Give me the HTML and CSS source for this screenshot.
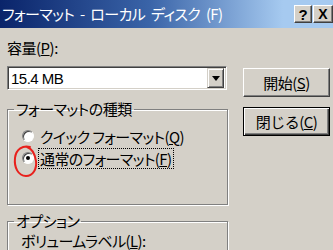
FILE: index.html
```html
<!DOCTYPE html>
<html lang="ja">
<head>
<meta charset="utf-8">
<title>フォーマット</title>
<link rel="stylesheet" href="styles.css">
</head>
<body>
<div class="window">
  <div class="titlebar">
    <span class="title">フォーマット - ローカル ディスク (F)</span>
    <div class="tbtns">
      <span class="tbtn help">?</span>
      <span class="tbtn close">X</span>
    </div>
  </div>
  <div class="content">
    <div class="left">
      <div class="lbl">容量(<u>P</u>):</div>
      <div class="combo">
        <span class="val">15.4 MB</span>
        <span class="drop"><svg width="8" height="5" viewBox="0 0 8 5"><path d="M0 0 H8 L4 5 Z" fill="#000"/></svg></span>
      </div>
      <fieldset class="group g1">
        <legend>フォーマットの種類</legend>
        <div class="radio"><span class="rb"></span><span class="rt">クイック フォーマット(<u>Q</u>)</span></div>
        <div class="radio"><span class="rb on"></span><span class="rt focus">通常のフォーマット(<u>F</u>)</span></div>
        <svg class="mark" width="26" height="34" viewBox="0 0 26 34"><path d="M17 3 C10 1 3 5 2 14 C1 23 5 32 13 32 C20 32 24 25 23 17 C22 10 20 5 14 3" stroke="#e8201c" stroke-width="2" fill="none" stroke-linecap="round"/></svg>
      </fieldset>
      <fieldset class="group g2">
        <legend>オプション</legend>
        <div class="lbl2">ボリュームラベル(<u>L</u>):</div>
      </fieldset>
    </div>
    <div class="right">
      <button class="btn">開始(<u>S</u>)</button>
      <button class="btn def">閉じる(<u>C</u>)</button>
    </div>
  </div>
</div>
</body>
</html>
```

FILE: styles.css
```css
html, body {
  margin: 0;
  padding: 0;
  overflow: hidden;
  background: #d4d0c8;
}
body {
  font-family: "Noto Sans CJK JP", "Liberation Sans", sans-serif;
  font-size: 15px;
  font-feature-settings: "palt";
  color: #000;
}
.window {
  width: 333px;
  height: 250px;
  overflow: hidden;
  background: #d4d0c8;
}
.titlebar {
  width: 333px;
  box-sizing: border-box;
  height: 28px;
  display: flex;
  align-items: center;
  justify-content: space-between;
  background: linear-gradient(to right, #0a246a 0%, #3a64a8 45%, #a6caf0 85%, #a6caf0 100%);
  padding-left: 2px;
}
.title {
  color: #fff;
  font-size: 15px;
  letter-spacing: -0.6px;
  word-spacing: 3px;
  white-space: nowrap;
  line-height: 20px;
}
.tbtns {
  display: flex;
  gap: 1px;
  flex: none;
}
.tbtn {
  flex: none;
  width: 18px;
  height: 18px;
  box-sizing: border-box;
  background: #d4d0c8;
  border-top: 1px solid #fff;
  border-left: 1px solid #fff;
  border-right: 1px solid #404040;
  border-bottom: 1px solid #404040;
  box-shadow: inset -1px -1px 0 #808080;
  display: flex;
  align-items: center;
  justify-content: center;
  font-family: "Liberation Sans", sans-serif;
  font-weight: bold;
  font-size: 15px;
  line-height: 1;
  color: #000;
}
.tbtn.close {
  width: 20px;
  font-size: 14px;
}
.content {
  display: flex;
  padding-left: 7px;
  gap: 15px;
}
.left {
  width: 221px;
  padding-top: 9px;
}
.lbl {
  height: 22px;
  line-height: 22px;
  letter-spacing: -0.5px;
}
.combo {
  margin-top: 7px;
  width: 220px;
  height: 24px;
  box-sizing: border-box;
  background: #fff;
  border-top: 1px solid #808080;
  border-left: 1px solid #808080;
  border-right: 1px solid #fff;
  border-bottom: 1px solid #fff;
  box-shadow: inset 1px 1px 0 #404040, inset -1px -1px 0 #d4d0c8;
  display: flex;
  align-items: center;
  justify-content: space-between;
  padding: 1px 2px 1px 2px;
}
.val {
  font-family: "Liberation Sans", sans-serif;
  font-size: 15px;
  letter-spacing: -0.5px;
  padding-left: 1px;
}
.drop {
  width: 17px;
  height: 20px;
  box-sizing: border-box;
  background: #d4d0c8;
  border-top: 1px solid #d4d0c8;
  border-left: 1px solid #d4d0c8;
  border-right: 1px solid #404040;
  border-bottom: 1px solid #404040;
  box-shadow: inset 1px 1px 0 #fff, inset -1px -1px 0 #808080;
  display: flex;
  align-items: center;
  justify-content: center;
}
.group {
  position: relative;
  margin: 0;
  padding: 0;
  width: 221px;
  box-sizing: border-box;
  border: 1px solid #808080;
  box-shadow: 1px 1px 0 #fff, inset 1px 1px 0 #fff;
}
.group legend {
  margin-left: 6px;
  padding: 0 2px;
  line-height: 18px;
  letter-spacing: -0.5px;
}
.g1 {
  margin-top: 10px;
  padding-top: 7px;
  height: 105px;
}
.g2 {
  margin-top: 7px;
  height: 60px;
}
.radio {
  display: flex;
  align-items: center;
  height: 22px;
  padding-left: 14px;
}
.rb {
  width: 12px;
  height: 12px;
  box-sizing: border-box;
  border-radius: 50%;
  background: #fff;
  border: 1px solid;
  border-color: #808080 #fff #fff #808080;
  box-shadow: inset 1px 1px 0 #404040;
  display: flex;
  align-items: center;
  justify-content: center;
  flex: none;
}
.rb.on::after {
  content: "";
  width: 4px;
  height: 4px;
  border-radius: 50%;
  background: #000;
}
.rt {
  margin-left: 4px;
  padding: 0 1px;
  line-height: 19px;
  letter-spacing: -0.6px;
  border: 1px solid transparent;
}
.rt.focus {
  border: 1px dotted #000;
}
.mark {
  position: absolute;
  left: 5px;
  top: 26px;
}
.lbl2 {
  padding-left: 13px;
  padding-top: 2px;
  line-height: 18px;
  letter-spacing: -0.6px;
}
.right {
  display: flex;
  flex-direction: column;
  gap: 10px;
  padding-top: 40px;
}
.btn {
  width: 87px;
  height: 29px;
  box-sizing: border-box;
  background: #d4d0c8;
  font-family: inherit;
  font-size: 15px;
  letter-spacing: -0.5px;
  color: #000;
  padding: 0;
  border-top: 1px solid #fff;
  border-left: 1px solid #fff;
  border-right: 1px solid #404040;
  border-bottom: 1px solid #404040;
  box-shadow: inset -1px -1px 0 #808080;
}
.btn.def {
  border: 1px solid #000;
  box-shadow: inset 1px 1px 0 #fff, inset -1px -1px 0 #404040, inset -2px -2px 0 #808080;
}
```
